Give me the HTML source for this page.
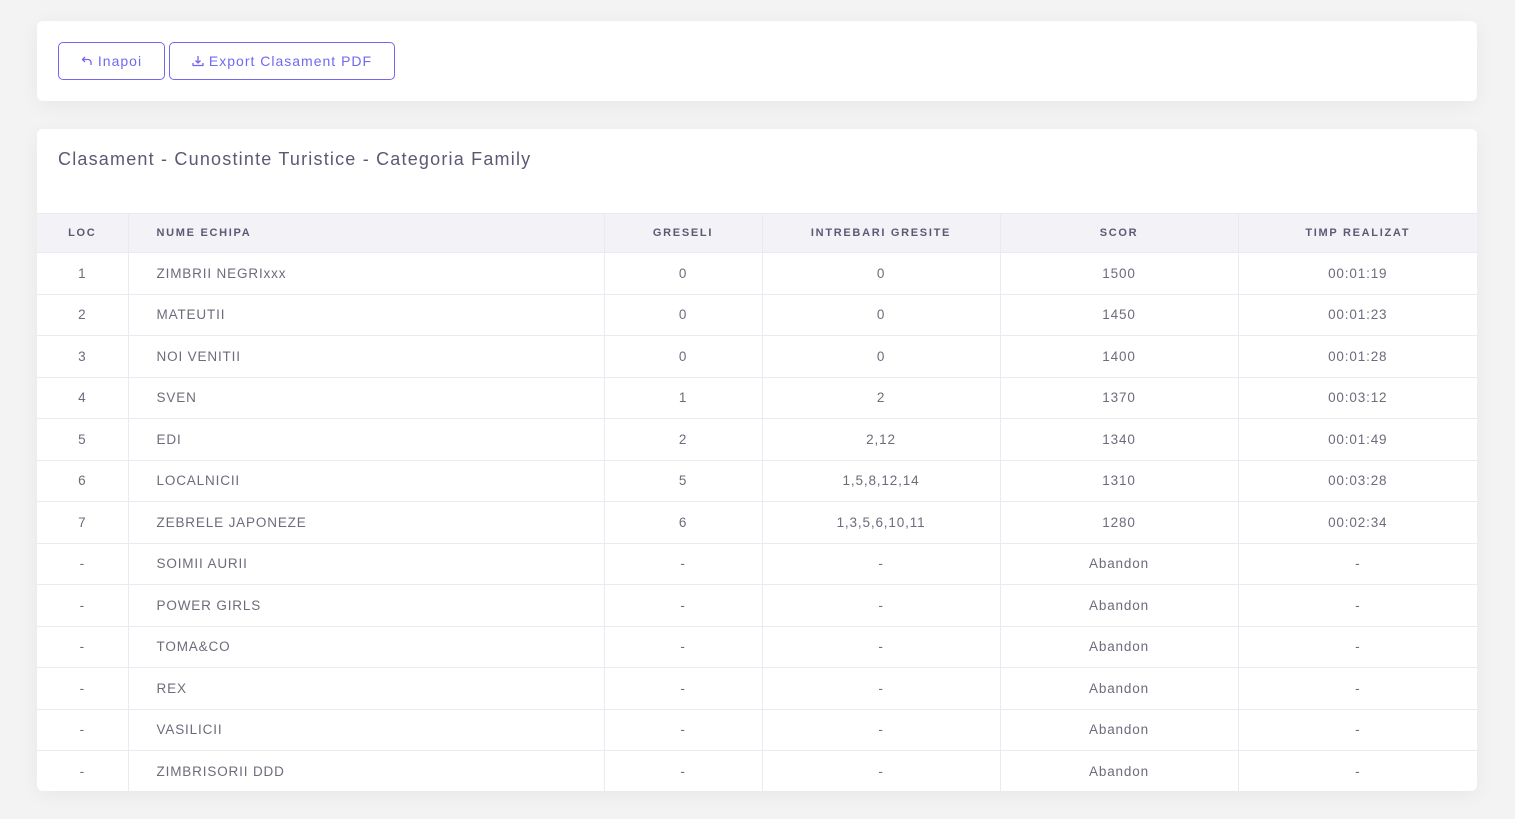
<!DOCTYPE html><html><head><style>
body{margin:0;background:#f3f3f4;font-family:"Liberation Sans",sans-serif;color:#6e6b7b}
.card{position:absolute;left:37px;width:1440px;background:#fff;border-radius:6px;box-shadow:0 4px 20px rgba(0,0,0,.05)}
.btn{position:absolute;top:21px;height:38px;border:1px solid #7367f0;border-radius:5px;color:#7367f0;font-size:14px;letter-spacing:1px;display:flex;align-items:center;justify-content:center;box-sizing:border-box;gap:5px}
table{position:absolute;top:84px;left:0;width:1440px;border-collapse:collapse;table-layout:fixed}
th{background:#f3f2f7;height:38px;padding:0;font-size:11px;font-weight:bold;letter-spacing:1.7px;color:#5e5873;border-top:1px solid #ebe9f1}
td{height:40.5px;font-size:13.5px;letter-spacing:0.85px;text-align:center;border-top:1px solid #ebe9f1;padding:0}
th+th,td+td{border-left:1px solid #ebe9f1}
th:nth-child(2),td:nth-child(2){text-align:left;padding-left:28px}
</style></head><body>
<div class="card" style="top:21px;height:80px">
<div class="btn" style="left:21px;width:107px"><svg width="12" height="12" viewBox="0 0 12 12" fill="none" stroke="#7367f0" stroke-width="1.3"><path d="M4 2L1.5 4.5 4 7M1.5 4.5H7a3 3 0 0 1 3 3V10"/></svg>Inapoi</div>
<div class="btn" style="left:132px;width:226px"><svg width="12" height="12" viewBox="0 0 12 12" fill="none" stroke="#7367f0" stroke-width="1.3"><path d="M1 8v2.5h10V8M6 1v7M3.5 5.5L6 8l2.5-2.5"/></svg>Export Clasament PDF</div>
</div>
<div class="card" style="top:129px;height:662px">
<div style="position:absolute;left:21px;top:20px;font-size:18px;letter-spacing:1.2px;color:#5e5873">Clasament - Cunostinte Turistice - Categoria Family</div>
<table><colgroup><col style="width:91px"><col style="width:476px"><col style="width:158px"><col style="width:238px"><col style="width:238px"><col></colgroup>
<tr><th>LOC</th><th>NUME ECHIPA</th><th>GRESELI</th><th>INTREBARI GRESITE</th><th>SCOR</th><th>TIMP REALIZAT</th></tr>
<tr><td>1</td><td>ZIMBRII NEGRIxxx</td><td>0</td><td>0</td><td>1500</td><td>00:01:19</td></tr>
<tr><td>2</td><td>MATEUTII</td><td>0</td><td>0</td><td>1450</td><td>00:01:23</td></tr>
<tr><td>3</td><td>NOI VENITII</td><td>0</td><td>0</td><td>1400</td><td>00:01:28</td></tr>
<tr><td>4</td><td>SVEN</td><td>1</td><td>2</td><td>1370</td><td>00:03:12</td></tr>
<tr><td>5</td><td>EDI</td><td>2</td><td>2,12</td><td>1340</td><td>00:01:49</td></tr>
<tr><td>6</td><td>LOCALNICII</td><td>5</td><td>1,5,8,12,14</td><td>1310</td><td>00:03:28</td></tr>
<tr><td>7</td><td>ZEBRELE JAPONEZE</td><td>6</td><td>1,3,5,6,10,11</td><td>1280</td><td>00:02:34</td></tr>
<tr><td>-</td><td>SOIMII AURII</td><td>-</td><td>-</td><td>Abandon</td><td>-</td></tr>
<tr><td>-</td><td>POWER GIRLS</td><td>-</td><td>-</td><td>Abandon</td><td>-</td></tr>
<tr><td>-</td><td>TOMA&amp;CO</td><td>-</td><td>-</td><td>Abandon</td><td>-</td></tr>
<tr><td>-</td><td>REX</td><td>-</td><td>-</td><td>Abandon</td><td>-</td></tr>
<tr><td>-</td><td>VASILICII</td><td>-</td><td>-</td><td>Abandon</td><td>-</td></tr>
<tr><td>-</td><td>ZIMBRISORII DDD</td><td>-</td><td>-</td><td>Abandon</td><td>-</td></tr>
</table></div>
</body></html>
